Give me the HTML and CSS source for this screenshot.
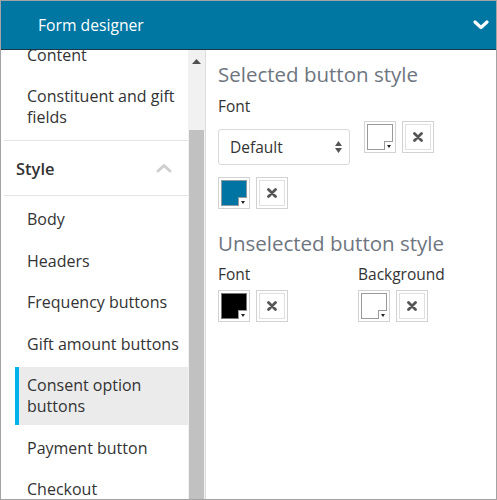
FILE: index.html
```html
<!DOCTYPE html>
<html>
<head>
<meta charset="utf-8">
<link rel="stylesheet" href="styles.css">
</head>
<body>
<div class="window">
  <header class="topbar">
    <span class="title">Form designer</span>
    <svg class="chev-down" width="16" height="10" viewBox="0 0 16 10"><path d="M2 2 L8 7.5 L14 2" fill="none" stroke="#fff" stroke-width="3.2" stroke-linecap="round" stroke-linejoin="round"/></svg>
  </header>
  <div class="content">
    <nav class="nav">
      <div class="nav-inner">
        <section class="nav-section">
          <ul class="nav-list">
            <li class="nav-item">Content</li>
            <li class="nav-item">Constituent and gift<br>fields</li>
          </ul>
        </section>
        <section class="nav-section">
          <div class="nav-head">
            <span>Style</span>
            <svg width="16" height="10" viewBox="0 0 16 10"><path d="M2 8 L8 2.5 L14 8" fill="none" stroke="#cfcfcf" stroke-width="3" stroke-linecap="round" stroke-linejoin="round"/></svg>
          </div>
        </section>
        <ul class="nav-list">
          <li class="nav-item">Body</li>
          <li class="nav-item">Headers</li>
          <li class="nav-item">Frequency buttons</li>
          <li class="nav-item">Gift amount buttons</li>
          <li class="nav-item active">Consent option<br>buttons</li>
          <li class="nav-item">Payment button</li>
          <li class="nav-item">Checkout</li>
        </ul>
      </div>
    </nav>
    <div class="scrollbar">
      <div class="sb-up"><svg width="9" height="5" viewBox="0 0 9 5"><path d="M0 5 L4.5 0 L9 5 Z" fill="#505050"/></svg></div>
      <div class="sb-track"><div class="sb-thumb"></div></div>
    </div>
    <main class="main">
      <h2 class="sec-title">Selected button style</h2>
      <div class="label">Font</div>
      <div class="row row-first">
        <div class="select">
          <span>Default</span>
          <svg width="7" height="12" viewBox="0 0 7 12"><path d="M0 5 L3.5 0 L7 5 Z M0 7 L3.5 12 L7 7 Z" fill="#555"/></svg>
        </div>
        <div class="swatch"><div class="swatch-fill white"><span class="notch"><span class="tri"></span></span></div></div>
        <div class="clear"><div class="clear-in"><svg width="10" height="10" viewBox="0 0 10 10"><path d="M1.5 1.5 L8.5 8.5 M8.5 1.5 L1.5 8.5" stroke="#555" stroke-width="2.8" stroke-linecap="round"/></svg></div></div>
      </div>
      <div class="row row-second">
        <div class="swatch"><div class="swatch-fill blue"><span class="notch"><span class="tri"></span></span></div></div>
        <div class="clear"><div class="clear-in"><svg width="10" height="10" viewBox="0 0 10 10"><path d="M1.5 1.5 L8.5 8.5 M8.5 1.5 L1.5 8.5" stroke="#555" stroke-width="2.8" stroke-linecap="round"/></svg></div></div>
      </div>

      <h2 class="sec-title sec-two">Unselected button style</h2>
      <div class="cols">
        <div class="col">
          <div class="label">Font</div>
          <div class="row row-col">
            <div class="swatch"><div class="swatch-fill black"><span class="notch"><span class="tri"></span></span></div></div>
            <div class="clear"><div class="clear-in"><svg width="10" height="10" viewBox="0 0 10 10"><path d="M1.5 1.5 L8.5 8.5 M8.5 1.5 L1.5 8.5" stroke="#555" stroke-width="2.8" stroke-linecap="round"/></svg></div></div>
          </div>
        </div>
        <div class="col">
          <div class="label">Background</div>
          <div class="row row-col">
            <div class="swatch"><div class="swatch-fill white"><span class="notch"><span class="tri"></span></span></div></div>
            <div class="clear"><div class="clear-in"><svg width="10" height="10" viewBox="0 0 10 10"><path d="M1.5 1.5 L8.5 8.5 M8.5 1.5 L1.5 8.5" stroke="#555" stroke-width="2.8" stroke-linecap="round"/></svg></div></div>
          </div>
        </div>
      </div>
    </main>
  </div>
</div>
</body>
</html>
```
FILE: styles.css
```css
* { box-sizing: border-box; }
html, body { margin: 0; padding: 0; background: #fff; }
body { font-family: "Open Sans", Lato, sans-serif; color: #333; }

.window {
  width: 497px;
  height: 500px;
  border: 1px solid #a3a3a3;
  display: flex;
  flex-direction: column;
  overflow: hidden;
}

.topbar {
  height: 49px;
  flex: none;
  background: #0076a3;
  border-bottom: 1px solid #17394a;
  display: flex;
  align-items: center;
  justify-content: space-between;
  padding: 0 7px 0 37px;
}
.title { color: #fff; font-size: 15.7px; }
.chev-down { display: block; }

.content {
  flex: 1;
  min-height: 0;
  display: flex;
}

.nav {
  width: 187px;
  flex: none;
  overflow: hidden;
}
.nav-inner { margin-top: -18.5px; padding-left: 3px; }
.nav-section { border-bottom: 1px solid #e3e3e3; }
.nav-list {
  list-style: none;
  margin: 0;
  padding: 5px 0 4px 11px;
  display: flex;
  flex-direction: column;
  gap: 4.5px;
}
.nav-item {
  font-size: 16px;
  line-height: 21px;
  padding: 8px 2px 8px 12px;
  color: #333;
  white-space: nowrap;
}
.nav-item.active {
  background: #ebebeb;
  border-left: 4px solid #00b2ec;
  padding-left: 8px;
}
.nav-head {
  height: 54px;
  display: flex;
  align-items: center;
  justify-content: space-between;
  padding: 0 16px 0 12px;
  font-size: 16.5px;
  font-weight: 600;
  color: #333;
}
.nav-head svg { display: block; }

.scrollbar {
  width: 17px;
  flex: none;
  background: #f1f1f1;
  display: flex;
  flex-direction: column;
}
.sb-up {
  height: 17px;
  display: flex;
  align-items: center;
  justify-content: center;
  padding-top: 5px;
}
.sb-up svg { display: block; }
.sb-track { flex: 1; padding-top: 63px; }
.sb-thumb { height: 100%; margin: 0 1px 0 1px; background: #c1c1c1; }

.main {
  flex: 1;
  border-left: 1px solid #dcdcdc;
  padding: 12px 12px 0 12px;
}
.sec-title {
  margin: 0;
  font-size: 20.5px;
  line-height: 24px;
  font-weight: 400;
  color: #6e7580;
}
.sec-two { margin-top: 22px; }
.label {
  margin-top: 10px;
  font-size: 15.5px;
  line-height: 20px;
  color: #333;
}
.cols { display: grid; grid-template-columns: 140px 140px; }
.cols .label { margin-top: 9px; }

.row { display: flex; align-items: flex-start; }
.row-first { margin-top: 5px; }
.row-second { margin-top: 12px; }
.row-col { margin-top: 6px; }

.select {
  width: 132px;
  height: 36px;
  margin-top: 8px;
  margin-right: 14px;
  border: 1px solid #d9d9d9;
  border-radius: 3px;
  display: flex;
  align-items: center;
  justify-content: space-between;
  padding: 0 7px 0 11px;
  font-size: 15.5px;
  color: #333;
}
.select svg { display: block; }

.swatch {
  width: 32px;
  height: 32px;
  border: 1px solid #d2d2d2;
  padding: 2px;
  margin-right: 6px;
}
.swatch-fill {
  position: relative;
  width: 100%;
  height: 100%;
  border: 1px solid #9a9a9a;
}
.swatch-fill.white { background: #fff; }
.swatch-fill.blue { background: #0074a3; border-color: #8a9aa3; }
.swatch-fill.black { background: #000; border-color: #777; }
.notch {
  position: absolute;
  right: -1px;
  bottom: -1px;
  width: 9px;
  height: 9px;
  background: #fff;
  border-top: 1px solid #9a9a9a;
  border-left: 1px solid #9a9a9a;
  display: flex;
  align-items: center;
  justify-content: center;
}
.tri {
  width: 0;
  height: 0;
  border-left: 2.5px solid transparent;
  border-right: 2.5px solid transparent;
  border-top: 3px solid #222;
}

.clear {
  width: 32px;
  height: 32px;
  border: 1px solid #d2d2d2;
  padding: 2px;
}
.clear-in {
  width: 100%;
  height: 100%;
  border: 1px solid #e0e0e0;
  display: flex;
  align-items: center;
  justify-content: center;
}
.clear-in svg { display: block; }
```
